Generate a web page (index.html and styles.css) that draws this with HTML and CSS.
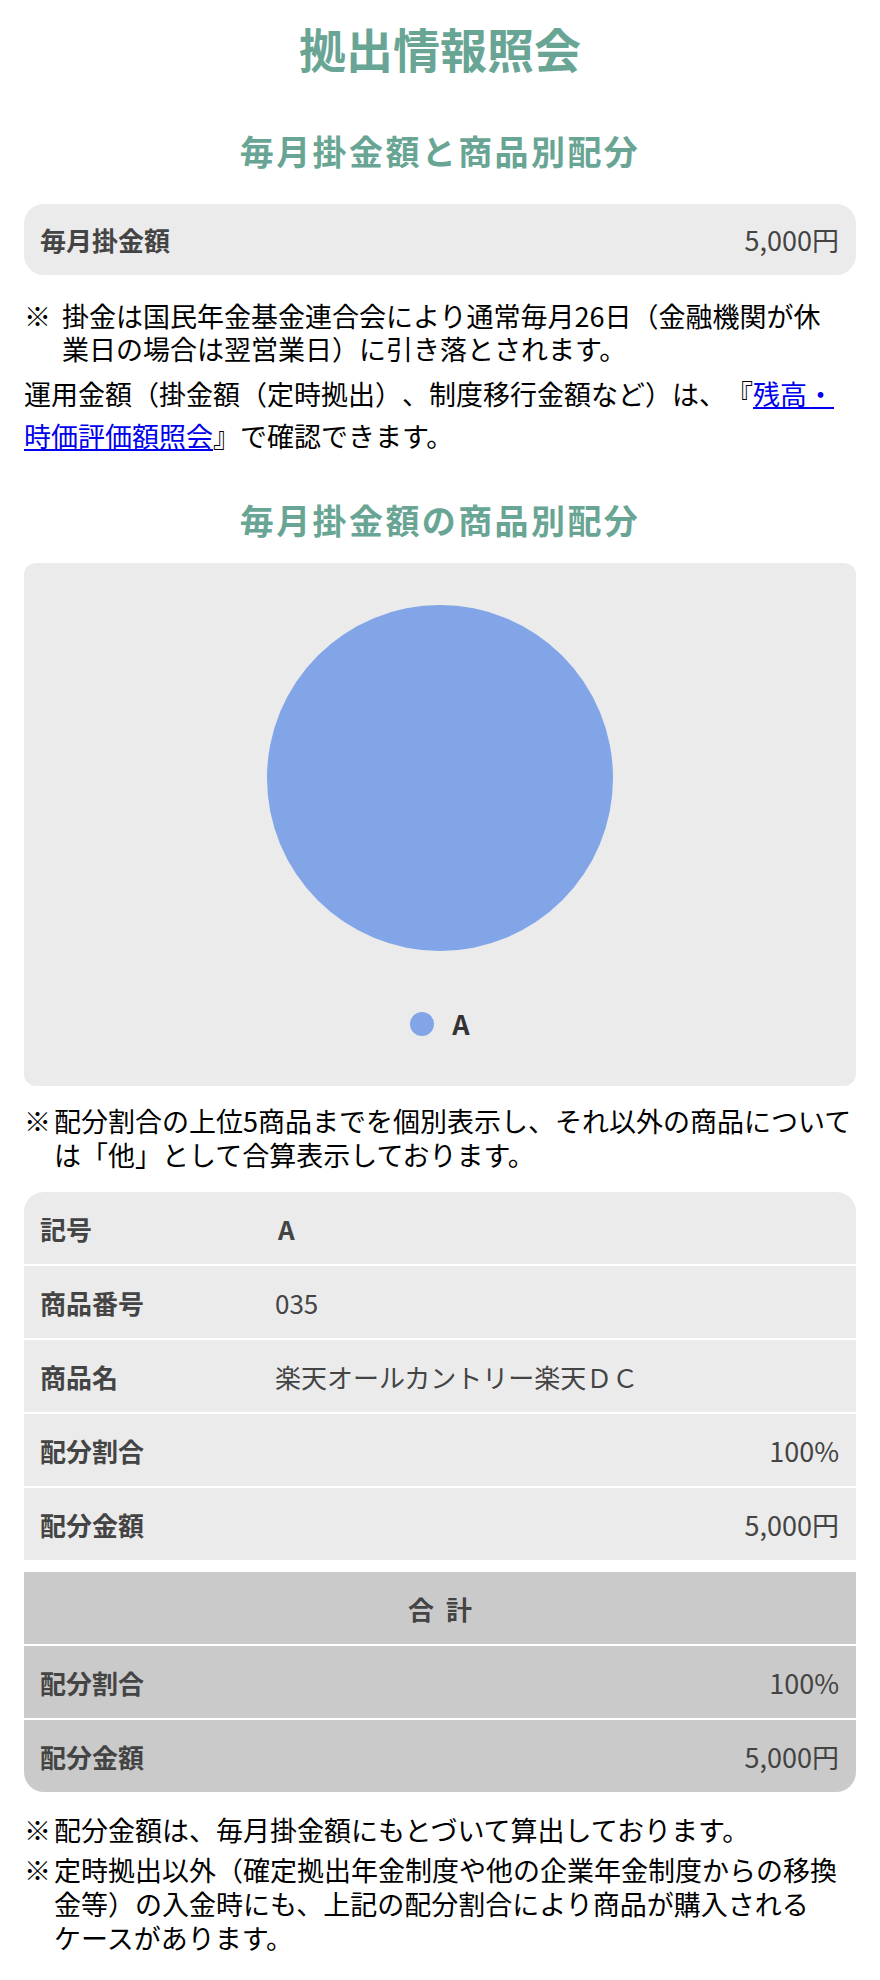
FILE: index.html
```html
<!DOCTYPE html>
<html lang="ja">
<head>
<meta charset="utf-8">
<title>拠出情報照会</title>
<link rel="stylesheet" href="styles.css">
</head>
<body>
<main class="page">
  <h1 class="title">拠出情報照会</h1>

  <h2 class="section-title first">毎月掛金額と商品別配分</h2>

  <div class="monthly-box">
    <span class="label">毎月掛金額</span>
    <span class="value">5,000円</span>
  </div>

  <p class="note note-first"><span class="mark mark-wide">※</span><span class="note-text">掛金は国民年金基金連合会により通常毎月26日（金融機関が休業日の場合は翌営業日）に引き落とされます。</span></p>

  <p class="para">運用金額（掛金額（定時拠出）、制度移行金額など）は、『<a href="#" class="link">残高・時価評価額照会</a>』で確認できます。</p>

  <h2 class="section-title second">毎月掛金額の商品別配分</h2>

  <div class="chart-box">
    <svg class="pie" width="346" height="346" viewBox="0 0 346 346">
      <circle cx="173" cy="173" r="173" fill="#82a5e8"/>
    </svg>
    <div class="legend">
      <span class="legend-dot"></span>
      <span class="legend-label">A</span>
    </div>
  </div>

  <p class="note note-chart"><span class="mark">※</span><span class="note-text">配分割合の上位5商品までを個別表示し、それ以外の商品については「他」として合算表示しております。</span></p>

  <div class="alloc">
    <div class="rows">
      <div class="row"><span class="cell-label">記号</span><span class="cell-value bold">A</span></div>
      <div class="row"><span class="cell-label">商品番号</span><span class="cell-value">035</span></div>
      <div class="row"><span class="cell-label">商品名</span><span class="cell-value">楽天オールカントリー楽天ＤＣ</span></div>
      <div class="row"><span class="cell-label">配分割合</span><span class="cell-value right">100%</span></div>
      <div class="row"><span class="cell-label">配分金額</span><span class="cell-value right">5,000円</span></div>
    </div>
    <div class="rows total">
      <div class="row total-head">合 計</div>
      <div class="row"><span class="cell-label">配分割合</span><span class="cell-value right">100%</span></div>
      <div class="row"><span class="cell-label">配分金額</span><span class="cell-value right">5,000円</span></div>
    </div>
  </div>

  <div class="notes-bottom">
    <p class="note"><span class="mark">※</span><span class="note-text">配分金額は、毎月掛金額にもとづいて算出しております。</span></p>
    <p class="note note-gap"><span class="mark">※</span><span class="note-text">定時拠出以外（確定拠出年金制度や他の企業年金制度からの移換金等）の入金時にも、上記の配分割合により商品が購入されるケースがあります。</span></p>
  </div>
</main>
</body>
</html>
```

FILE: styles.css
```css
html, body {
  margin: 0;
  padding: 0;
  background: #ffffff;
}

body {
  font-family: "Noto Sans CJK JP", "Noto Sans", sans-serif;
  color: #000;
  font-size: 27px;
  line-break: strict;
  text-spacing-trim: space-all;
}

.page {
  width: 832px;
  padding: 0 24px;
  display: flow-root;
}

.title {
  margin: 20px 0 0;
  font-size: 47px;
  line-height: 56px;
  font-weight: 700;
  text-align: center;
  color: #69a594;
}

.section-title {
  margin: 0;
  font-size: 34px;
  line-height: 44px;
  font-weight: 700;
  letter-spacing: 2.4px;
  text-align: center;
  color: #69a594;
}

.section-title.first {
  margin-top: 53px;
}

.section-title.second {
  margin-top: 41px;
}

.monthly-box {
  margin-top: 31px;
  height: 71px;
  background: #ebebeb;
  border-radius: 20px;
  display: flex;
  align-items: center;
  justify-content: space-between;
  padding: 0 17px 0 16px;
  font-size: 26px;
  color: #444;
}

.monthly-box .label {
  font-weight: 700;
}

.monthly-box .value {
  font-size: 27px;
}

.note {
  margin: 0;
  display: flex;
  line-height: 34px;
}

.mark {
  flex: 0 0 30px;
}

.mark-wide {
  flex-basis: 38px;
}

.note-text {
  flex: 1 1 auto;
  min-width: 0;
}

.note-first {
  margin-top: 24px;
  line-height: 33px;
  padding-right: 14px;
}

.para {
  margin: 8px 0 0;
  line-height: 42px;
}

.link {
  color: #0000ee;
  text-decoration: underline;
}

.chart-box {
  margin-top: 21px;
  height: 523px;
  box-sizing: border-box;
  background: #ebebeb;
  border-radius: 12px;
  padding-top: 42px;
  display: flex;
  flex-direction: column;
  align-items: center;
}

.pie {
  display: block;
}

.legend {
  margin-top: 61px;
  display: flex;
  align-items: center;
  gap: 18px;
  height: 24px;
}

.legend-dot {
  width: 24px;
  height: 24px;
  border-radius: 50%;
  background: #82a5e8;
}

.legend-label {
  font-size: 27px;
  font-weight: 700;
  color: #333;
  line-height: 24px;
}

.note-chart {
  margin-top: 18px;
}

.alloc {
  margin-top: 20px;
  border-radius: 20px;
  overflow: hidden;
  display: flex;
  flex-direction: column;
  gap: 12px;
}

.rows {
  display: flex;
  flex-direction: column;
  gap: 2px;
}

.row {
  height: 72px;
  background: #ebebeb;
  display: grid;
  grid-template-columns: 251px 1fr;
  align-items: center;
  font-size: 26px;
  color: #444;
}

.total .row {
  background: #cacaca;
}

.cell-label {
  padding-left: 16px;
  font-weight: 700;
}

.cell-value {
  padding-right: 17px;
}

.cell-value.right {
  text-align: right;
  font-size: 27px;
}

.cell-value.bold {
  font-weight: 700;
  padding-left: 3px;
}

.total-head {
  display: flex;
  justify-content: center;
  font-weight: 700;
  word-spacing: 6px;
}

.notes-bottom {
  margin-top: 21px;
}

.note-gap {
  margin-top: 6px;
}
```
